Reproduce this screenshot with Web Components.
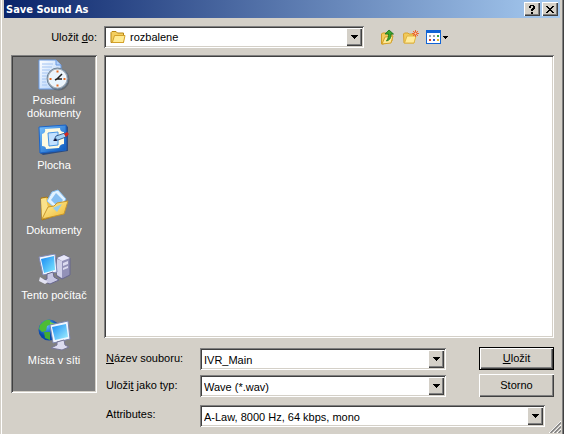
<!DOCTYPE html>
<html lang="cs">
<head>
<meta charset="utf-8">
<title>Save Sound As</title>
<style>
html, body { margin: 0; min-height: 100%; background: #fff; }
body { font: 11px/13px "Liberation Sans", Arial, sans-serif; color: #000; overflow: hidden; }
</style>
</head>
<body>
<save-dialog heading="Save Sound As"></save-dialog>

<script>
const bevel = {
  sunken: "box-shadow: inset 1px 1px #808080, inset -1px -1px #fff, inset 2px 2px #404040, inset -2px -2px #d4d0c8;",
  raised: "box-shadow: inset 1px 1px #fff, inset -1px -1px #404040, inset -2px -2px #808080;"
};

const icons = {
  recent: `<svg viewBox="0 0 32 32" width="32" height="32"><defs><linearGradient id="a" x2="1" y2="1"><stop stop-color="#fff"/><stop offset="1" stop-color="#a9ccfa"/></linearGradient></defs>
    <path d="M1 1H18L23 6V30H1Z" fill="url(#a)" stroke="#6b9be3"/><path d="M18 1V6H23" fill="#b5d1f7" stroke="#6b9be3"/><path d="M4 5H15M4 8H14M4 11H12M4 14H10M4 17H9M4 20H8M4 23H8M4 26H9" stroke="#a4c4f2"/>
    <circle cx="20.500" cy="20.500" r="11" fill="#4e5660" opacity=".6"/><circle cx="19.500" cy="19.500" r="10.500" fill="#a9b6c4" stroke="#6f8498"/><circle cx="19.500" cy="19.500" r="8.500" fill="#eaf5fe" stroke="#fff"/><path d="M19 20L24 15M19 20H24M19 20L17 21" stroke="#222" stroke-width="1.500" fill="none"/><path d="M18.500 11.500h2v2h-2zM18.500 25.500h2v2h-2zM11.500 19h2v2h-2zM25.500 19h2v2h-2z" fill="#e86a20"/></svg>`,
  desktop: `<svg viewBox="0 0 32 32" width="32" height="32"><defs><linearGradient id="a" x2="1" y2="1"><stop stop-color="#7cc4ff"/><stop offset="1" stop-color="#0756bd"/></linearGradient></defs>
    <path d="M2 4L28 1L30 3V27L5 31L2 29Z" fill="#163f81" opacity=".8"/><path d="M1 3L28 1V26L2 29Z" fill="url(#a)" stroke="#1b65c9"/><path d="M7 5L22 4Q22 8 26 8V20Q22 20 21 24L8 25Q8 22 4 22V10Q8 9 7 5Z" fill="#fffbe2"/><path d="M10 9L20 8V21L11 22Z" fill="#c3e1ff" stroke="#4794e3"/><path d="M16 16L18 12L27 9L28 13L20 16Z" fill="#a6d3f6" stroke="#204477" stroke-width=".8"/><path d="M26 10L29 8L31 10L28 13Z" fill="#d3271d"/><path d="M15 17L18 14L19 17Z" fill="#113"/></svg>`,
  documents: `<svg viewBox="0 0 32 32" width="32" height="32"><defs><linearGradient id="a" x2="1" y2="1"><stop stop-color="#fff3a4"/><stop offset="1" stop-color="#efb62e"/></linearGradient></defs>
    <path d="M3 9L9 8L12 11L26 13V24L4 31Z" fill="#edc04b" stroke="#a57818"/><path d="M9 12L14 3L20 1L28 10L20 22Z" fill="#e1f2ff" stroke="#84bff2"/><path d="M13 11L18 4L25 11L20 18Z" fill="#86bff2"/><path d="M3 10L8 9L10 19L4 30Z" fill="#fae28b"/><path d="M4 30L10 18L16 17L19 14L30 12L26 25Z" fill="url(#a)" stroke="#c9972c"/><path d="M15 19L24 15L19 23Z" fill="#95cceb"/></svg>`,
  computer: `<svg viewBox="0 0 34 32" width="34" height="32"><defs><linearGradient id="a" x2="1" y2="1"><stop stop-color="#1687f3"/><stop offset="1" stop-color="#82eaff"/></linearGradient></defs>
    <path d="M20 4L27 1L33 4V21L25 25L20 22Z" fill="#9291b8" stroke="#67678e"/><path d="M20 4L25 7L33 4L27 1Z" fill="#e8e8fa"/><path d="M20 5L25 7V24L20 21Z" fill="#d2d2ea"/><path d="M26 9l5-2v3l-5 2zm0 5l5-2v2l-5 2z" fill="#dcdcf0"/><path d="M2 3L18 0L20 18L6 21Z" fill="#f2f7ff" stroke="#8189b6"/><path d="M4 5L17 2L18 16L7 19Z" fill="url(#a)"/><path d="M10 20L16 18L17 23L22 26L13 30L5 27L10 25Z" fill="#c6c6e2" stroke="#67678e"/><path d="M3 23L11 28L8 30L2 27Z" fill="#e3e3f3"/></svg>`,
  network: `<svg viewBox="0 0 34 32" width="34" height="32"><defs><linearGradient id="a" x2="1" y2="1"><stop stop-color="#168bf4"/><stop offset="1" stop-color="#a5f2ff"/></linearGradient><radialGradient id="b" cx=".4" cy=".3"><stop stop-color="#5dbbff"/><stop offset="1" stop-color="#0647aa"/></radialGradient></defs>
    <circle cx="12" cy="11" r="10.500" fill="url(#b)"/><path d="M3 6Q8 0 13 1L14 5L10 7L9 12L5 13L2 10Z" fill="#4dbc35"/><path d="M13 3L19 5L20 9L13 10Z" fill="#75ce43"/><path d="M7 13L13 13L13 21L8 19Z" fill="#43ad30"/><path d="M13 6L31 2L33 20L16 24Z" fill="#f0f6ff" stroke="#7c84ae"/><path d="M15 8L29 5L31 18L18 21Z" fill="url(#a)"/><path d="M20 23L27 21L28 26L32 28L25 31L14 29L20 26Z" fill="#dcdcf0" stroke="#777798"/></svg>`,
  folder: `<svg viewBox="0 0 16 16" width="16" height="16"><path d="M1 3.500L2 2.500H6L7.500 4H13.500V13.500H1Z" fill="#f4cf60" stroke="#b88714"/><path d="M2.500 13L4.500 6.500H15L13.500 13.500H2Z" fill="#ffeb94" stroke="#d4a12a"/></svg>`,
  up: `<svg viewBox="0 0 16 16" width="16" height="16"><path d="M1.500 5L2.500 4H6L7 5H12V12L3 15H1.500Z" fill="#f2ca5b" stroke="#d09b25"/><path d="M2 15L5 8L13 7L11 14Z" fill="#ffe995" stroke="#d4a12a"/><path d="M9 1L13.500 5H11C11 9 10 11 6.500 12C8.500 9 8.500 7 8.500 5H5Z" fill="#3ba52d" stroke="#16721a" stroke-width=".8"/></svg>`,
  fresh: `<svg viewBox="0 0 16 16" width="16" height="16"><path d="M.5 5L1.500 4H5L6 5H11V14H1Z" fill="#f2ca5b" stroke="#d8a32e"/><path d="M1.500 14L4 7H13L11 14Z" fill="#ffeb9b" stroke="#dfb544"/><path d="M12.500 1V8M9 4.500H16M10 2L15 7M15 2L10 7" stroke="#f26a30"/><circle cx="12.500" cy="4.500" r="1.500" fill="#ffd9a0" stroke="#e64d20"/></svg>`,
  views: `<svg viewBox="0 0 22 16" width="22" height="16" shape-rendering="crispEdges"><path d="M0 1H15V15H0Z" fill="#1264d5"/><path d="M1 4H14V14H1Z" fill="#fff"/><path d="M3 6h2v2H3zM7 6h2v2H7z" fill="#9ca3b0"/><path d="M11 6h2v2h-2z" fill="#38a545"/><path d="M3 10h2v2H3z" fill="#d64531"/><path d="M7 10h2v2H7z" fill="#245bd1"/><path d="M11 10h2v2h-2z" fill="#e2b32f"/><path d="M17 7H22V8H21V9H20V10H19V9H18V8H17Z" fill="#000"/></svg>`
};

function define(name, markup, ready) {
  const template = document.createElement("template");
  template.innerHTML = markup;
  customElements.define(name, class extends HTMLElement {
    connectedCallback() {
      if (this.shadowRoot) return;
      this.attachShadow({ mode: "open" }).append(template.content.cloneNode(true));
      if (ready) ready(this, this.shadowRoot);
    }
  });
}

define("shell-icon", `<style>:host { display: block; } svg { display: block; }</style>`, (host, root) => {
  root.innerHTML += icons[host.getAttribute("name")];
});

define("title-bar", `<style>
  :host { display: flex; align-items: center; gap: 2px; height: 18px; padding: 0 2px; background: linear-gradient(90deg, #0a246a, #a6caf0); color: #fff; }
  h1 { flex: 1; margin: 0; padding-top: 1px; font: bold 11px/16px "DejaVu Sans Condensed", "Liberation Sans", sans-serif; }
  button { box-sizing: border-box; width: 16px; height: 14px; padding: 0; border: 0; background: #d4d0c8; ${bevel.raised} }
  svg { display: block; margin: auto; }
</style><h1><slot></slot></h1>
<button aria-label="Help"><svg width="6" height="9" viewBox="0 0 6 9" shape-rendering="crispEdges"><path d="M1 0h4v1h1v3H5v1H4v1H2V4h1V3h1V1H2v2H0V1h1zM2 7h2v2H2z"/></svg></button>
<button aria-label="Close"><svg width="8" height="7" viewBox="0 0 8 7" shape-rendering="crispEdges"><path d="M0 0h2v1h1v1h2V1h1V0h2v1H7v1H6v1H5v1h1v1h1v1h1v1H6V6H5V5H3v1H2v1H0V6h1V5h1V4h1V3H2V2H1V1H0z"/></svg></button>`);

define("drop-field", `<style>
  :host { display: block; min-width: 0; }
  .box { display: grid; grid-template-columns: auto minmax(0, 1fr) 16px; height: 22px; box-sizing: border-box; padding: 2px; background: #fff; ${bevel.sunken} }
  select, input { grid-area: 1 / 1 / 2 / 4; min-width: 0; width: 100%; height: 18px; box-sizing: border-box; margin: 0; border: 0; padding: 2px 18px 0 2px; outline: 0; background: transparent; appearance: none; border-radius: 0; color: #000; font: inherit; line-height: 16px; }
  :host([icon]) select { padding-left: 24px; padding-top: 0; }
  shell-icon { grid-area: 1 / 1; margin: 1px 0 0 4px; pointer-events: none; }
  .arrow { grid-area: 1 / 3; z-index: 1; display: grid; place-items: center; padding: 0; border: 0; background: #d4d0c8; pointer-events: none; ${bevel.raised} }
</style><div class="box"></div>`, (host, root) => {
  const box = root.querySelector(".box"), value = host.getAttribute("value"), label = host.getAttribute("label");
  box.innerHTML = (host.hasAttribute("editable")
    ? `<input aria-label="${label}" value="${value}">`
    : `<select aria-label="${label}"><option>${value}</option></select>`)
    + (host.hasAttribute("icon") ? `<shell-icon name="${host.getAttribute("icon")}"></shell-icon>` : "")
    + `<span class="arrow"><svg width="7" height="4" viewBox="0 0 7 4" shape-rendering="crispEdges"><path d="M0 0h7v1H6v1H5v1H4v1H3V3H2V2H1V1H0z"/></svg></span>`;
});

define("push-button", `<style>
  :host { display: block; }
  button { display: block; width: 100%; height: 23px; padding: 0; border: 0; background: #d4d0c8; color: #000; font: inherit; ${bevel.raised} }
  :host([primary]) button { border: 1px solid #000; }
</style><button><slot></slot></button>`);

define("tool-button", `<style>
  :host { display: block; } button { display: block; padding: 0; border: 0; background: none; }
</style><button><slot></slot></button>`, (host, root) => {
  root.querySelector("button").setAttribute("aria-label", host.getAttribute("label"));
});

define("place-item", `<style>
  :host { display: block; min-height: 65px; }
  button { display: flex; flex-direction: column; align-items: center; gap: 3px; width: 100%; padding: 0; border: 0; background: none; color: #fff; font: inherit; line-height: 13px; }
  .label { max-width: 74px; }
</style><button><slot name="icon"></slot><span class="label"><slot></slot></span></button>`);

define("places-bar", `<style>
  :host { display: block; box-sizing: border-box; background: #808080; padding: 4px 2px 6px; ${bevel.sunken} }
</style>
<place-item><shell-icon slot="icon" name="recent"></shell-icon>Poslední dokumenty</place-item>
<place-item><shell-icon slot="icon" name="desktop"></shell-icon>Plocha</place-item>
<place-item><shell-icon slot="icon" name="documents"></shell-icon>Dokumenty</place-item>
<place-item><shell-icon slot="icon" name="computer"></shell-icon>Tento počítač</place-item>
<place-item><shell-icon slot="icon" name="network"></shell-icon>Místa v síti</place-item>`);

define("file-list", `<style>
  :host { display: block; background: #fff; ${bevel.sunken} }
</style><slot></slot>`);

define("save-form", `<style>
  :host { display: grid; grid-template-columns: 94px minmax(0, 1fr) 75px; row-gap: 4px; column-gap: 2px; align-items: center; }
  drop-field { margin-right: 31px; }
  .wide { grid-column: 2 / 4; margin: 4px 9px 0 0; }
  .label { padding-left: 2px; }
</style>
<span class="label"><u>N</u>ázev souboru:</span><drop-field editable label="Název souboru:" value="IVR_Main"></drop-field><push-button primary><u>U</u>ložit</push-button>
<span class="label">Uloži<u>t</u> jako typ:</span><drop-field label="Uložit jako typ:" value="Wave (*.wav)"></drop-field><push-button>Storno</push-button>
<span class="label">Attributes:</span><drop-field class="wide" label="Attributes:" value="A-Law, 8000 Hz, 64 kbps, mono"></drop-field>`);

define("save-dialog", `<style>
  :host { position: relative; display: flex; flex-direction: column; box-sizing: border-box; min-height: 100vh; margin-right: 5px; padding: 0 4px; background: #d4d0c8; box-shadow: inset 1px 0 #d4d0c8, inset 2px 0 #fff, inset -1px 0 #404040, inset -2px 0 #808080; }
  .body { flex: 1; display: grid; grid-template: 22px minmax(0, 1fr) auto / 86px minmax(0, 1fr); column-gap: 7px; padding: 8px 6px 7px 7px; }
  .look { text-align: right; line-height: 22px; }
  .bar { display: flex; align-items: center; }
  .bar drop-field { flex: 0 1 260px; }
  .tools { display: flex; gap: 7px; margin-left: 16px; }
  places-bar { grid-row: 2 / 4; align-self: start; margin-top: 7px; min-height: 338px; }
  file-list { margin-top: 7px; }
  save-form { margin-top: 9px; }
  .grip { position: absolute; right: 3px; bottom: 1px; }
</style>
<title-bar></title-bar>
<div class="body">
  <span class="look">Uložit <u>d</u>o:</span>
  <div class="bar"><drop-field icon="folder" label="Uložit do:" value="rozbalene"></drop-field>
    <div class="tools"><tool-button label="O úroveň výš"><shell-icon name="up"></shell-icon></tool-button><tool-button label="Nová složka"><shell-icon name="fresh"></shell-icon></tool-button><tool-button label="Zobrazit"><shell-icon name="views"></shell-icon></tool-button></div></div>
  <places-bar></places-bar>
  <file-list></file-list>
  <save-form></save-form>
</div>
<svg class="grip" width="12" height="12" viewBox="0 0 12 12"><path d="M0 12L12 0M4 12L12 4M8 12L12 8" stroke="#fff"/><path d="M1.500 12L12 1.500M5.500 12L12 5.500M9.500 12L12 9.500" stroke="#808080" stroke-width="1.500"/></svg>`, (host, root) => {
  root.querySelector("title-bar").textContent = host.getAttribute("heading");
});
</script>
</body>
</html>
